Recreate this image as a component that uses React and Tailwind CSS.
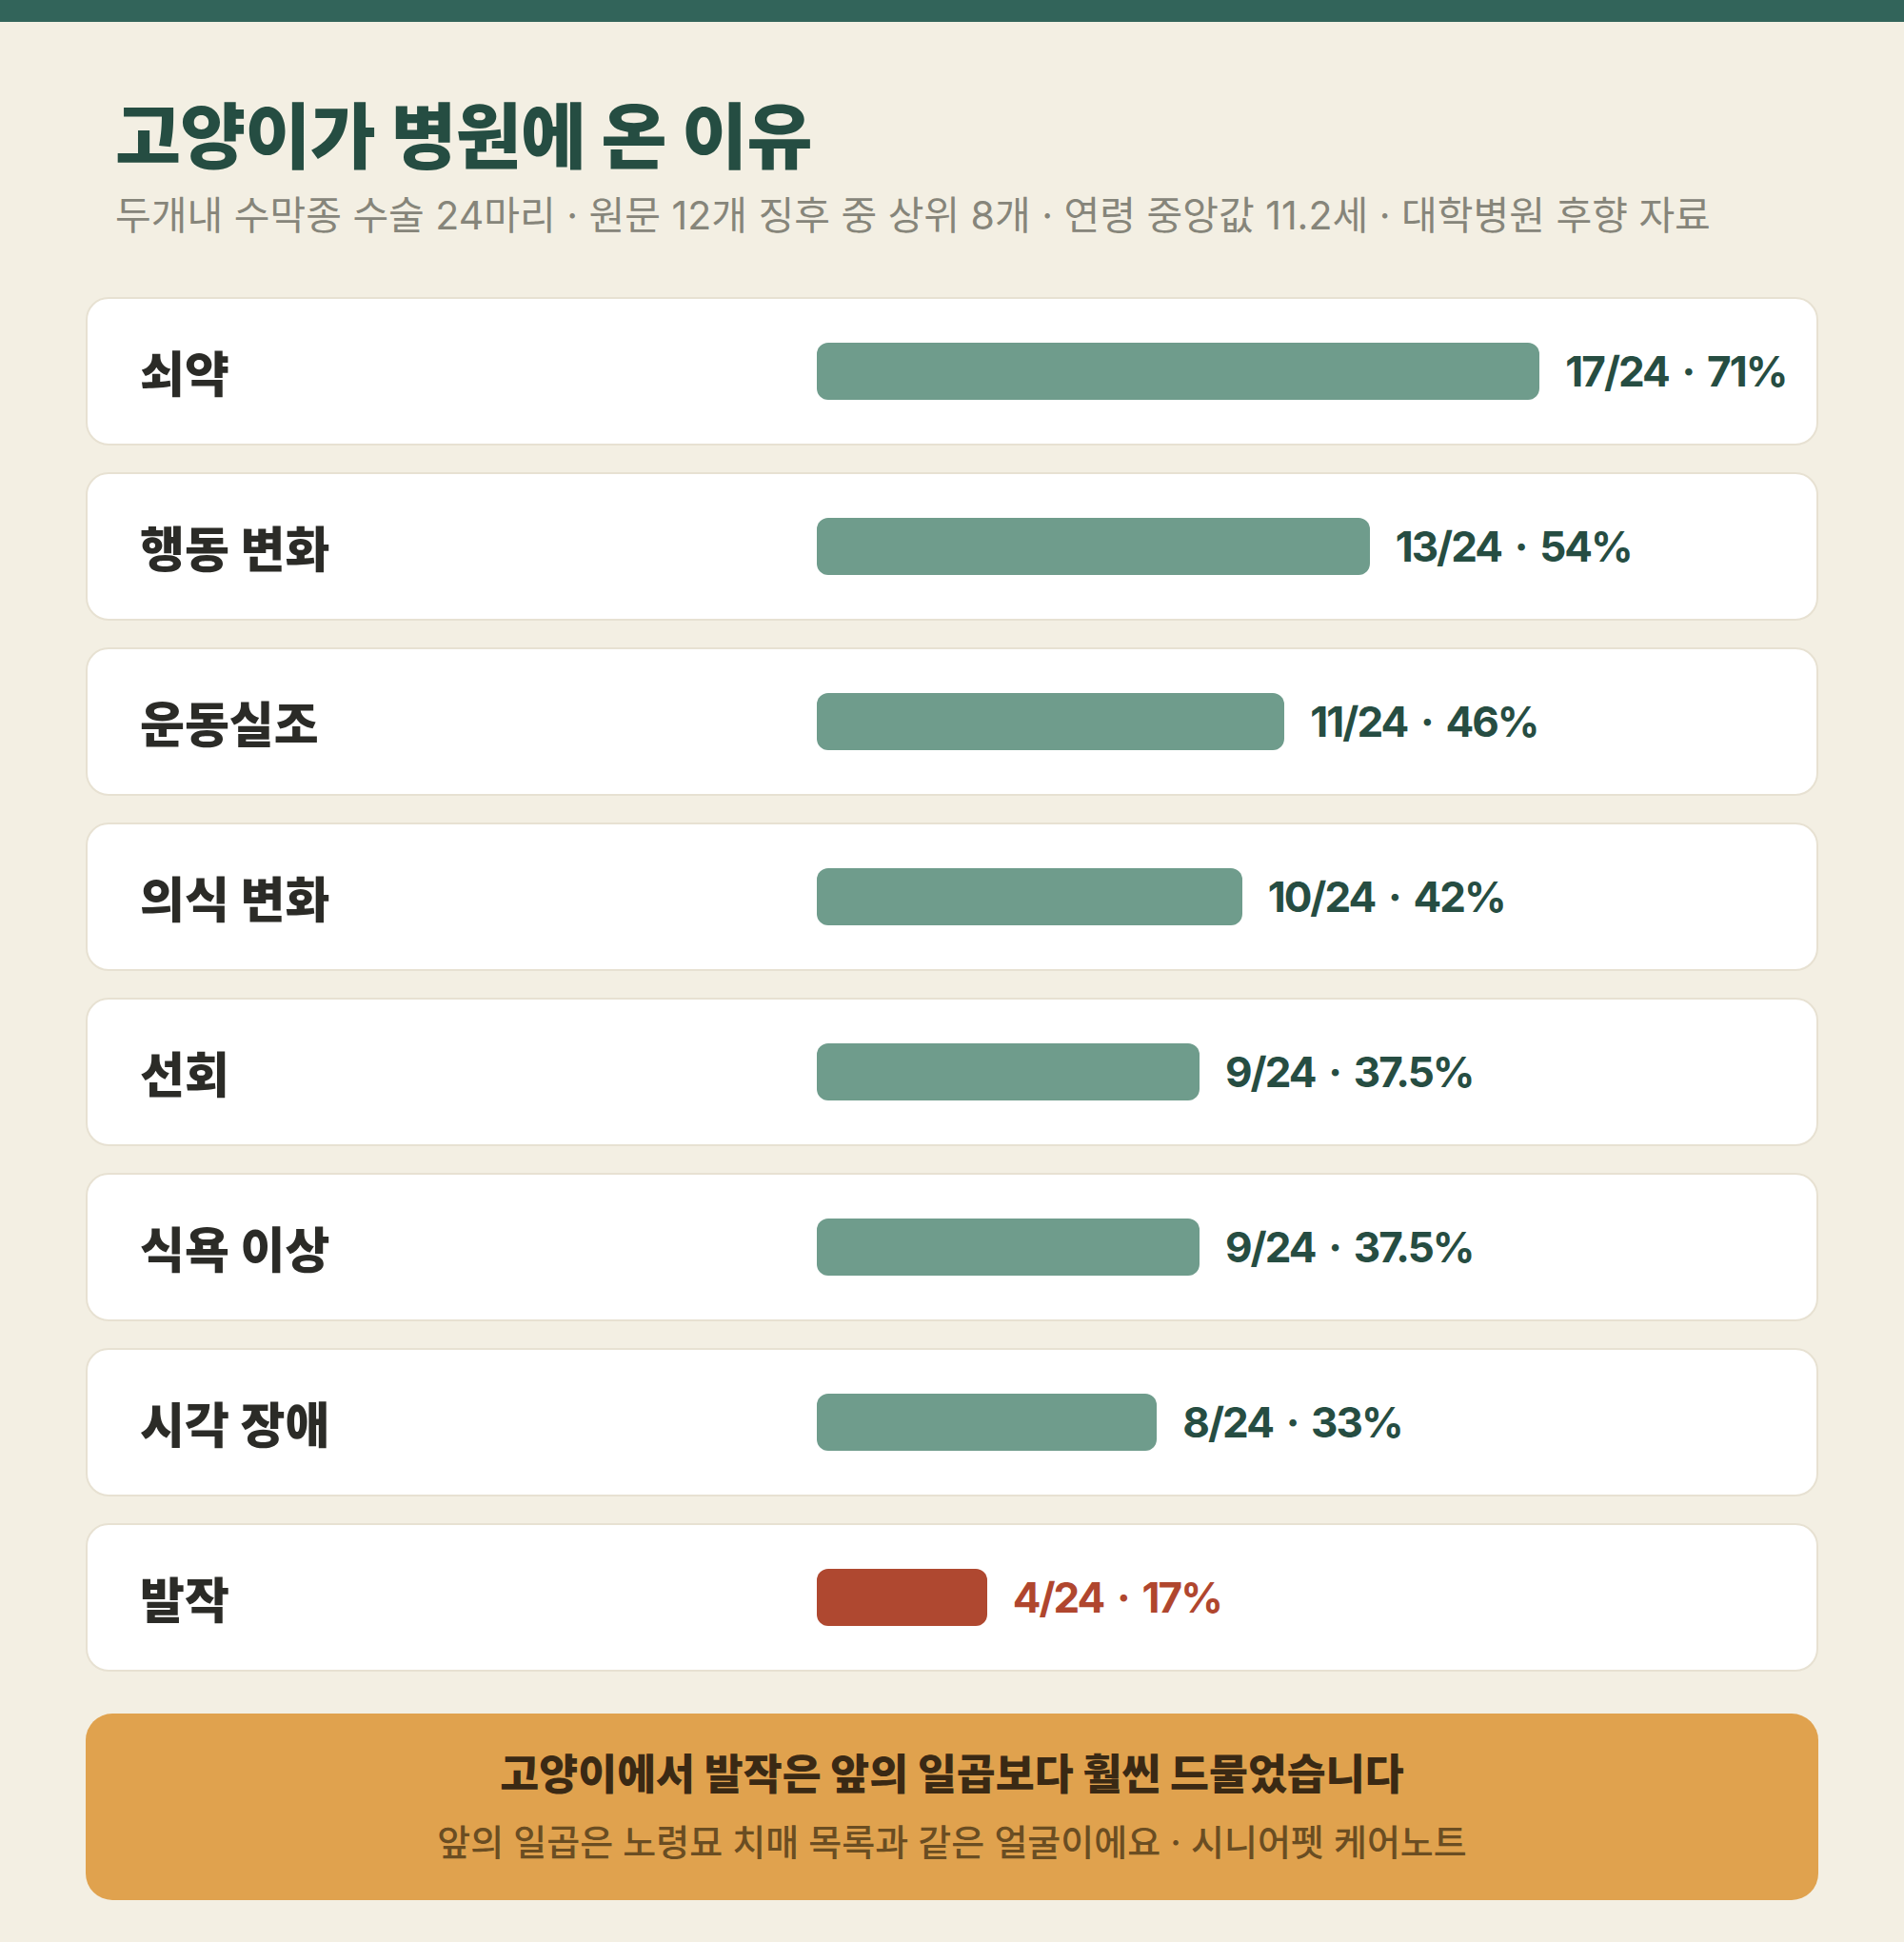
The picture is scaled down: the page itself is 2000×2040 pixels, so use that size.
import React from "react";

const rows = [
  { label: "쇠약", n: 17, pct: "71%" },
  { label: "행동 변화", n: 13, pct: "54%" },
  { label: "운동실조", n: 11, pct: "46%" },
  { label: "의식 변화", n: 10, pct: "42%" },
  { label: "선회", n: 9, pct: "37.5%" },
  { label: "식욕 이상", n: 9, pct: "37.5%" },
  { label: "시각 장애", n: 8, pct: "33%" },
  { label: "발작", n: 4, pct: "17%", alert: true },
];

// track width the bars are scaled against
const TRACK = 1072;

function Row({ item }) {
  return (
    <div className="h-[156px] bg-white rounded-[24px] border-2 border-[#E7E1D2] flex items-center pl-[55px]">
      <div className="w-[711px] shrink-0 font-['Noto_Sans_CJK_KR',sans-serif] text-[51px] font-extrabold text-[#2B2B27] leading-none">
        {item.label}
      </div>
      <div
        className={
          item.alert
            ? "h-[60px] rounded-[12px] bg-[#AF4830] shrink-0"
            : "h-[60px] rounded-[12px] bg-[#6F9C8C] shrink-0"
        }
        style={{ width: (item.n / 24) * TRACK }}
      />
      <div
        className={
          item.alert
            ? "ml-[27px] text-[44px] font-bold leading-none tracking-[-0.045em] [word-spacing:0.12em] text-[#B0462E]"
            : "ml-[27px] text-[44px] font-bold leading-none tracking-[-0.045em] [word-spacing:0.12em] text-[#264D42]"
        }
      >
        {item.n}/24 · {item.pct}
      </div>
    </div>
  );
}

export default function App() {
  return (
    <div className="min-h-screen bg-[#F3EFE3] font-['Inter','Noto_Sans_CJK_KR',sans-serif]">
      <div className="h-[23px] bg-[#32645A]" />
      <div className="px-[90px] pt-[71px] pb-[44px]">
        <div className="px-[31px]">
          <h1 className="font-['Noto_Sans_CJK_KR',sans-serif] text-[75px] font-extrabold leading-[90px] tracking-[-0.01em] text-[#254D42]">
            고양이가 병원에 온 이유
          </h1>
          <p className="mt-[17px] text-[41px] leading-[50px] text-[#86857A]">
            두개내 수막종 수술 24마리 · 원문 12개 징후 중 상위 8개 · 연령 중앙값 11.2세 · 대학병원 후향 자료
          </p>
        </div>
        <div className="mt-[61px] flex flex-col gap-[28px]">
          {rows.map((item, i) => (
            <Row item={item} key={i} />
          ))}
        </div>
        <div className="mt-[44px] h-[196px] rounded-[28px] bg-[#E0A24E] flex flex-col items-center justify-center">
          <div className="text-[44.5px] font-extrabold leading-none text-[#3A2914]">
            고양이에서 발작은 앞의 일곱보다 훨씬 드물었습니다
          </div>
          <div className="mt-[30px] text-[38px] font-medium leading-none text-[#6A4D22]">
            앞의 일곱은 노령묘 치매 목록과 같은 얼굴이에요 · 시니어펫 케어노트
          </div>
        </div>
      </div>
    </div>
  );
}
